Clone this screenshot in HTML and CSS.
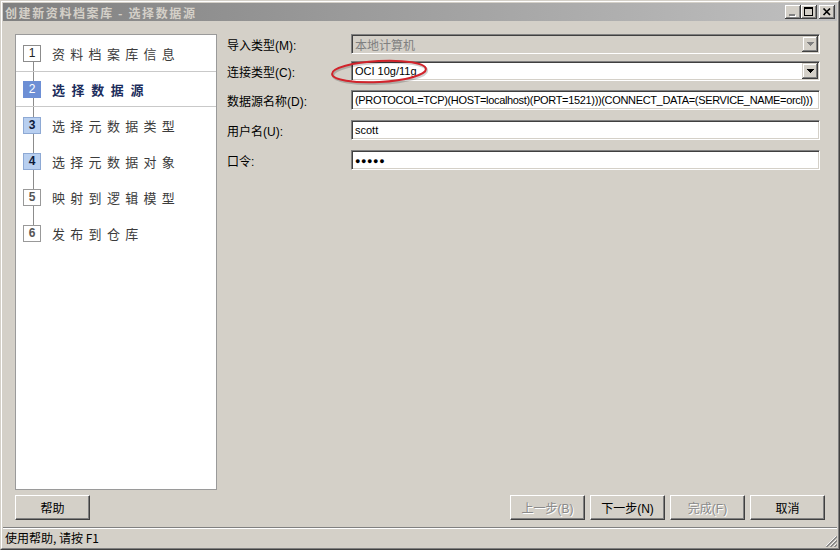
FILE: index.html
```html
<!DOCTYPE html>
<html lang="zh-CN">
<head>
<meta charset="utf-8">
<title>创建新资料档案库 - 选择数据源</title>
<link rel="stylesheet" href="styles.css">
</head>
<body>
<div class="window">
  <div class="frame">
    <div class="titlebar">
      <span class="title">创建新资料档案库 - 选择数据源</span>
      <div class="tb-buttons">
        <span class="tb"><svg width="16" height="14" viewBox="0 0 16 14" shape-rendering="crispEdges"><rect x="5" y="10" width="6" height="2" fill="#fff"/><rect x="4" y="9" width="6" height="2" fill="#808080"/></svg></span>
        <span class="tb"><svg width="16" height="14" viewBox="0 0 16 14" shape-rendering="crispEdges"><rect x="3" y="2" width="9" height="2" fill="#000"/><rect x="3" y="2" width="1" height="9" fill="#000"/><rect x="11" y="2" width="1" height="9" fill="#000"/><rect x="3" y="10" width="9" height="1" fill="#000"/></svg></span>
        <span class="tb tb-close"><svg width="16" height="14" viewBox="0 0 16 14"><path d="M4.5 3.5 L11 10 M11 3.5 L4.5 10" stroke="#000" stroke-width="1.7" fill="none"/></svg></span>
      </div>
    </div>

    <div class="content">
      <div class="main">
        <ul class="steps">
          <li class="step first"><span class="num n-plain">1</span><span class="label">资料档案库信息</span></li>
          <li class="step current"><span class="num n-current">2</span><span class="label">选择数据源</span></li>
          <li class="step"><span class="num n-next">3</span><span class="label">选择元数据类型</span></li>
          <li class="step"><span class="num n-next">4</span><span class="label">选择元数据对象</span></li>
          <li class="step"><span class="num n-later">5</span><span class="label">映射到逻辑模型</span></li>
          <li class="step last"><span class="num n-later">6</span><span class="label">发布到仓库</span></li>
        </ul>

        <div class="form">
          <div class="row r1">
            <span class="lbl">导入类型(M):</span>
            <div class="field disabled"><span class="val">本地计算机</span><span class="drop drop-off"><svg width="7" height="4" viewBox="0 0 7 4" shape-rendering="crispEdges"><path d="M0 0H7L3.5 4Z" fill="#808080"/></svg></span></div>
          </div>
          <div class="row r2">
            <span class="lbl">连接类型(C):</span>
            <div class="field"><span class="val">OCI 10g/11g</span><span class="drop"><svg width="7" height="4" viewBox="0 0 7 4" shape-rendering="crispEdges"><path d="M0 0H7L3.5 4Z" fill="#000"/></svg></span></div>
          </div>
          <div class="row r3">
            <span class="lbl">数据源名称(D):</span>
            <div class="field"><span class="val long">(PROTOCOL=TCP)(HOST=localhost)(PORT=1521)))(CONNECT_DATA=(SERVICE_NAME=orcl)))</span></div>
          </div>
          <div class="row r4">
            <span class="lbl">用户名(U):</span>
            <div class="field"><span class="val">scott</span></div>
          </div>
          <div class="row r5">
            <span class="lbl">口令:</span>
            <div class="field"><span class="val dots">●●●●●</span></div>
          </div>
        </div>
      </div>

      <div class="footer">
        <button class="btn">帮助</button>
        <div class="spacer"></div>
        <button class="btn off">上一步(B)</button>
        <button class="btn">下一步(N)</button>
        <button class="btn off">完成(F)</button>
        <button class="btn">取消</button>
      </div>
    </div>

    <div class="statusbar">
      <span class="status-text">使用帮助, 请按 F1</span>
      <svg class="grip" width="12" height="12" viewBox="0 0 12 12">
        <path d="M11 1 L1 11 M11 5 L5 11 M11 9 L9 11" stroke="#fff" stroke-width="1" fill="none"/>
        <path d="M12 1.5 L1.5 12 M12 5.5 L5.5 12 M12 9.5 L9.5 12" stroke="#808080" stroke-width="1.4" fill="none"/>
      </svg>
    </div>
  </div>

  <svg class="mark" width="112" height="34" viewBox="0 0 112 34">
    <ellipse cx="54" cy="17" rx="47" ry="10.5" transform="rotate(-3 54 17)" fill="none" stroke="rgba(0,0,0,0.18)" stroke-width="2.5"/>
    <ellipse cx="53" cy="15.5" rx="47" ry="10.5" transform="rotate(-3 53 15.5)" fill="none" stroke="#d1232b" stroke-width="2"/>
  </svg>
</div>
</body>
</html>
```

FILE: styles.css
```css
html, body {
  margin: 0;
  padding: 0;
}

body {
  width: 840px;
  height: 550px;
  overflow: hidden;
  background: #d4d0c8;
  font-family: "Liberation Sans", "Noto Sans CJK SC", sans-serif;
  font-size: 12px;
  color: #000;
}

.window {
  position: relative;
  width: 840px;
  height: 550px;
  box-sizing: border-box;
  border: 1px solid;
  border-color: #d4d0c8 #404040 #404040 #d4d0c8;
  background: #d4d0c8;
}

.frame {
  height: 100%;
  box-sizing: border-box;
  border: 1px solid;
  border-color: #fff #808080 #808080 #fff;
  padding: 1px;
  display: flex;
  flex-direction: column;
}

/* ---------- title bar ---------- */
.titlebar {
  height: 18px;
  flex: none;
  display: flex;
  align-items: center;
  padding-left: 2px;
  background: linear-gradient(to right, #808080, #c0c0c0);
}

.title {
  color: #d4d0c8;
  font-family: "Noto Sans CJK SC", sans-serif;
  font-weight: bold;
  font-size: 12px;
  letter-spacing: 1.6px;
  white-space: nowrap;
}

.tb-buttons {
  margin-left: auto;
  margin-right: 2px;
  display: flex;
  align-items: center;
}

.tb {
  width: 16px;
  height: 14px;
  display: block;
  background: #d4d0c8;
  box-shadow: inset -1px -1px #404040, inset 1px 1px #fff, inset -2px -2px #808080, inset 2px 2px #d4d0c8;
}

.tb svg {
  display: block;
}

.tb-close {
  margin-left: 2px;
}

/* ---------- content ---------- */
.content {
  flex: none;
  padding-top: 13px;
}

.main {
  height: 456px;
  display: flex;
  padding: 0 12px;
}

.steps {
  width: 202px;
  box-sizing: border-box;
  margin: 0;
  padding: 0;
  list-style: none;
  background: #fff;
  border: 1px solid #9a9a9a;
}

.step {
  position: relative;
  height: 36px;
  box-sizing: border-box;
  display: flex;
  align-items: center;
}

.step::before {
  content: "";
  position: absolute;
  left: 17px;
  top: 0;
  bottom: 0;
  width: 1px;
  background: #8c8c8c;
}

.step.first::before {
  top: 50%;
}

.step.last::before {
  bottom: 50%;
}

.step.current {
  border-top: 1px solid #c9c9c9;
  border-bottom: 1px solid #c9c9c9;
}

.num {
  position: relative;
  margin-left: 7px;
  width: 18px;
  height: 17px;
  box-sizing: border-box;
  border: 1px solid #8c8c8c;
  background: #fff;
  display: flex;
  align-items: center;
  justify-content: center;
  font-family: "Liberation Sans", sans-serif;
  font-size: 12px;
  line-height: 1;
}

.n-plain {
  color: #222;
}

.n-current {
  background: #6d8fd5;
  border-color: #6d8fd5;
  color: #fff;
}

.n-next {
  background: #b8cff0;
  border-color: #8ea9d4;
  color: #0d1a3a;
  font-weight: bold;
}

.n-later {
  color: #555;
  font-weight: bold;
  border-color: #999;
}

.label {
  margin-left: 11px;
  font-family: "Noto Sans CJK SC", sans-serif;
  font-size: 13px;
  letter-spacing: 5.3px;
  color: #3c3c3c;
  white-space: nowrap;
}

.current .label {
  font-weight: bold;
  color: #1c2d5c;
  letter-spacing: 6.6px;
}

/* ---------- form ---------- */
.form {
  margin-left: 10px;
  display: flex;
  flex-direction: column;
}

.row {
  display: flex;
  align-items: center;
  height: 20px;
  margin-bottom: 10px;
}

.row.r1 {
  margin-bottom: 7px;
}

.row.r2 {
  margin-bottom: 9px;
}

.lbl {
  width: 124px;
  flex: none;
  white-space: nowrap;
  font-size: 12px;
}

.field {
  width: 469px;
  height: 20px;
  box-sizing: border-box;
  border: 1px solid;
  border-color: #808080 #fff #fff #808080;
  box-shadow: inset 1px 1px #404040, inset -1px -1px #d4d0c8;
  background: #fff;
  display: flex;
  align-items: center;
  padding: 0 1px 0 3px;
  overflow: hidden;
}

.field.disabled {
  background: #d4d0c8;
  color: #808080;
}

.val {
  font-family: "Liberation Sans", "Noto Sans CJK SC", sans-serif;
  font-size: 11px;
  white-space: nowrap;
}

.val.long {
  letter-spacing: -0.34px;
}

.disabled .val {
  font-size: 12px;
  font-family: "Noto Sans CJK SC", sans-serif;
}

.dots {
  font-size: 9px;
  letter-spacing: 0.6px;
  padding-top: 1px;
}

.drop {
  margin-left: auto;
  width: 16px;
  height: 16px;
  flex: none;
  box-sizing: border-box;
  background: #d4d0c8;
  box-shadow: inset -1px -1px #404040, inset 1px 1px #d4d0c8, inset -2px -2px #808080, inset 2px 2px #fff;
  display: flex;
  align-items: center;
  justify-content: center;
}

.drop svg {
  display: block;
}

/* ---------- footer buttons ---------- */
.footer {
  display: flex;
  margin-top: 5px;
  padding: 0 12px;
  gap: 5px;
}

.spacer {
  flex: 1;
}

.btn {
  width: 75px;
  height: 25px;
  box-sizing: border-box;
  margin: 0;
  padding: 0;
  border: 1px solid;
  border-color: #fff #404040 #404040 #fff;
  box-shadow: inset -1px -1px #808080, inset 1px 1px #d4d0c8;
  background: #d4d0c8;
  font-family: "Liberation Sans", "Noto Sans CJK SC", sans-serif;
  font-size: 12px;
  color: #000;
}

.btn.off {
  color: #8a8a8a;
  text-shadow: 1px 1px #fff;
}

/* ---------- status bar ---------- */
.statusbar {
  margin-top: 7px;
  flex: 1;
  display: flex;
  align-items: center;
  position: relative;
  border-top: 1px solid #808080;
  box-shadow: inset 0 1px #fff;
  padding-left: 2px;
}

.status-text {
  font-family: "Noto Sans CJK SC", sans-serif;
  font-size: 12px;
  line-height: 1;
}

.grip {
  position: absolute;
  right: 0;
  bottom: 0;
}

/* ---------- annotation ---------- */
.mark {
  position: absolute;
  left: 325px;
  top: 55px;
  pointer-events: none;
}
```
